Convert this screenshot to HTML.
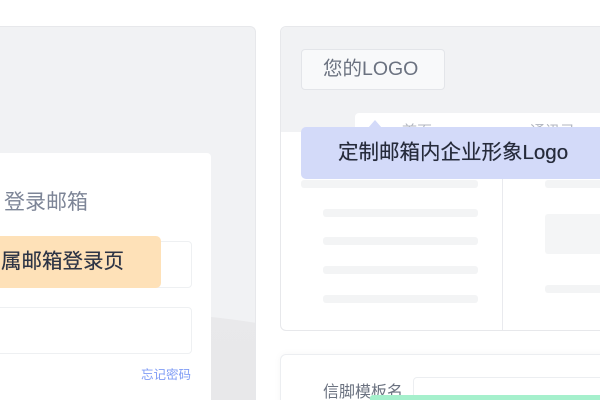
<!DOCTYPE html>
<html><head><meta charset="utf-8"><style>
*{margin:0;padding:0;box-sizing:border-box}
html,body{width:600px;height:400px;overflow:hidden}
body{background:#fff;position:relative;font-family:"Liberation Sans","Noto Sans CJK SC",sans-serif}
.a{position:absolute}
</style></head><body>
<!-- left card -->
<div class="a" style="left:-20px;top:26px;width:276px;height:374px;background:#f1f2f4;border:1px solid #e7e8eb;border-bottom:none;border-radius:6px 6px 0 0;overflow:hidden">
  <div class="a" style="left:-200px;top:286px;width:700px;height:300px;border-radius:50%;background:linear-gradient(#e9e9eb,#e4e4e6)"></div>
</div>
<div class="a" style="left:-20px;top:153px;width:231px;height:247px;background:#fff;border-radius:4px 4px 0 0"></div>
<div class="a" style="left:4px;top:189px;font-size:21px;color:#7d8597;line-height:28px">登录邮箱</div>
<div class="a" style="left:-20px;top:241px;width:212px;height:47px;border:1px solid #eef0f2;border-radius:4px;background:#fff"></div>
<div class="a" style="left:-20px;top:307px;width:212px;height:47px;border:1px solid #eef0f2;border-radius:4px;background:#fff"></div>
<div class="a" style="left:-20px;top:236px;width:181px;height:52px;background:#fee1b8;border-radius:5px"></div>
<div class="a" style="left:1px;top:248px;font-size:20.5px;color:#2d3445;line-height:28px;text-shadow:0 0 .4px #2d3445">属邮箱登录页</div>
<div class="a" style="left:141px;top:367px;font-size:12.5px;color:#7f9cf5;line-height:16px">忘记密码</div>

<!-- right card -->
<div class="a" style="left:280px;top:26px;width:340px;height:305px;background:#fff;border:1px solid #e7e8eb;border-radius:6px;overflow:hidden">
  <div class="a" style="left:0;top:0;width:100%;height:105px;background:#f1f2f4"></div>
</div>
<div class="a" style="left:301px;top:49px;width:144px;height:41px;background:#f8f9fa;border:1px solid #e3e5e9;border-radius:4px;font-size:19.5px;color:#6b7280;line-height:39px;padding-left:21px">您的LOGO</div>
<div class="a" style="left:355px;top:113px;width:260px;height:40px;background:#fff;border-radius:4px 0 0 0;font-size:15px;color:#b0b5bf">
  <span class="a" style="left:47px;top:7px">首页</span><span class="a" style="left:175px;top:7px">通讯录</span>
</div>
<div class="a" style="left:502px;top:151px;width:1px;height:179px;background:#e9eaee"></div>
<div class="a" style="left:301px;top:180px;width:177px;height:8px;background:#f3f4f5;border-radius:3px"></div>
<div class="a" style="left:323px;top:209px;width:155px;height:8px;background:#f3f4f5;border-radius:3px"></div>
<div class="a" style="left:323px;top:237px;width:155px;height:8px;background:#f3f4f5;border-radius:3px"></div>
<div class="a" style="left:323px;top:266px;width:155px;height:8px;background:#f3f4f5;border-radius:3px"></div>
<div class="a" style="left:323px;top:295px;width:155px;height:8px;background:#f3f4f5;border-radius:3px"></div>
<div class="a" style="left:545px;top:180px;width:60px;height:8px;background:#f3f4f5;border-radius:3px"></div>
<div class="a" style="left:545px;top:214px;width:60px;height:40px;background:#f4f5f6;border-radius:3px"></div>
<div class="a" style="left:545px;top:285px;width:60px;height:8px;background:#f3f4f5;border-radius:3px"></div>
<div class="a" style="left:368px;top:120px;width:0;height:0;border-left:7px solid transparent;border-right:7px solid transparent;border-bottom:8px solid #d3daf9"></div>
<div class="a" style="left:301px;top:127px;width:310px;height:52px;background:#d3daf9;border-radius:5px"></div>
<div class="a" style="left:338px;top:139px;font-size:20.5px;color:#262b3b;line-height:28px;text-shadow:0 0 .4px #262b3b">定制邮箱内企业形象Logo</div>

<!-- bottom card -->
<div class="a" style="left:280px;top:354px;width:340px;height:60px;background:#fff;border:1px solid #eceef1;border-radius:6px;box-shadow:0 0 8px rgba(0,0,0,.04)"></div>
<div class="a" style="left:323px;top:382px;font-size:16px;color:#6b7280;line-height:22px">信脚模板名</div>
<div class="a" style="left:413px;top:377px;width:200px;height:40px;border:1px solid #eceef1;border-radius:4px;background:#fff"></div>
<div class="a" style="left:370px;top:395px;width:240px;height:10px;background:#a5f0cc;border-radius:3px"></div>
</body></html>
